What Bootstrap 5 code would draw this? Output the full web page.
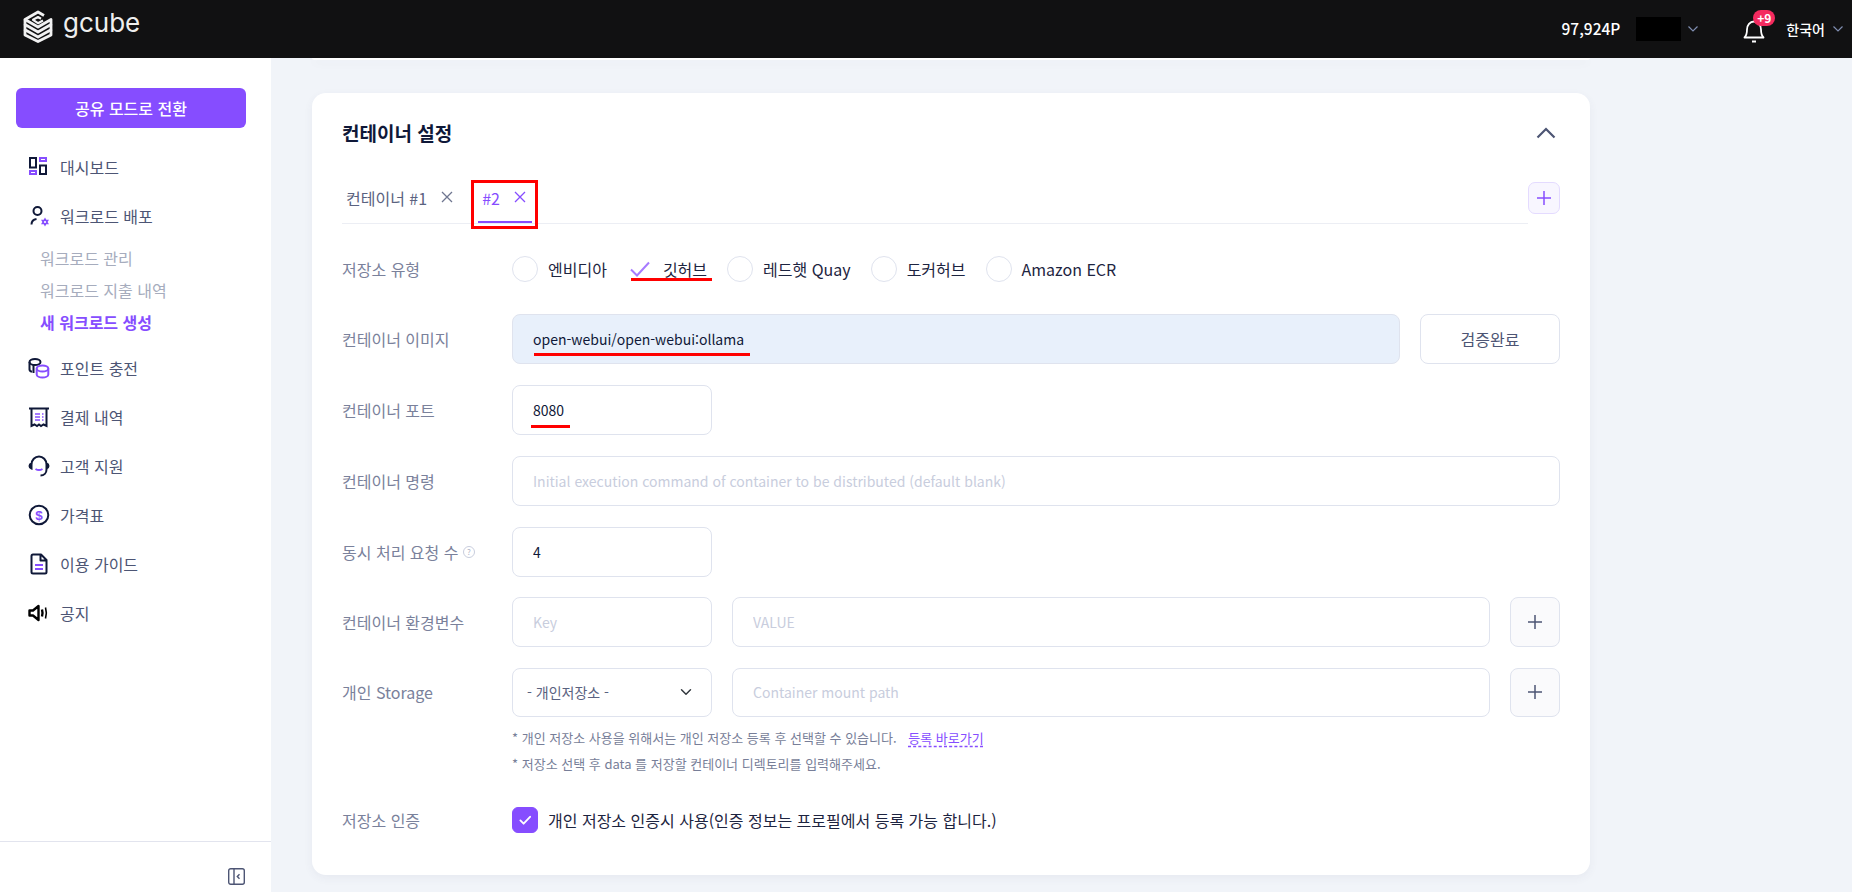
<!DOCTYPE html>
<html lang="ko">
<head>
  <meta charset="utf-8" />
  <title>gcube - 새 워크로드 생성</title>
  <link href="https://cdn.jsdelivr.net/npm/bootstrap@5.3.0/dist/css/bootstrap.min.css" rel="stylesheet" />
  <style>
    html, body { height: 100%; }
    body { font-family: "Noto Sans CJK KR", "Noto Sans", sans-serif; background: #f1f4f9; color: #0f1838; overflow: hidden; }
    .topbar { height: 58px; background: #111112; color: #fff; flex: none; padding: 0 9px 0 23px; }
    .logo-text { font-family: Inter, sans-serif; font-size: 26px; font-weight: 400; line-height: 1; margin-left: 10px; color: #eee; position: relative; top: -6px; }
    .points { font-size: 15.500px; font-weight: 500; }
    .masked { width: 45px; height: 24px; background: #000; margin: 0 7px 0 16px; }
    .bell-wrap { width: 32px; height: 26px; margin: 0 11px 0 45px; }
    .bell-badge { position: absolute; left: 10px; top: -6px; width: 22px; height: 16px; border-radius: 8px; background: #f42a5f; font-size: 12px; font-weight: 700; line-height: 16px; text-align: center; }
    .lang { font-size: 14px; font-weight: 500; margin-right: 8px; }
    .side { width: 271px; background: #fff; flex: none; }
    .mode-btn { width: 230px; height: 40px; margin: 30px 0 14px 16px; background: #864dff; border: 0; border-radius: 6px; color: #fff; font-size: 16px; font-weight: 500; padding: 0; flex: none; }
    .mode-btn:hover { background: #864dff; color: #fff; }
    .side-item { height: 49px; flex: none; padding-left: 28px; color: #4d5574; font-size: 16px; text-decoration: none; }
    .side-item svg { width: 22px; height: 22px; margin-right: 10px; flex: none; }
    .side-sub { padding: 2px 0 5.500px 40px; flex: none; }
    .side-sub a { display: block; height: 32px; line-height: 32px; color: #a6acbd; font-size: 16px; text-decoration: none; }
    .side-sub a.active { color: #864dff; font-weight: 700; }
    .side-foot { height: 51px; border-top: 1px solid #e2e4ee; padding: 26px 26px 0 0; }
    .prev-panel { width: 1278px; height: 2px; margin-left: 41px; background: #fff; border-radius: 0 0 14px 14px; box-shadow: 0 3px 10px rgba(60, 70, 110, .06); }
    .panel { width: 1278px; height: 782px; margin: 33px 0 0 41px; background: #fff; border: 0; border-radius: 14px; box-shadow: 0 3px 10px rgba(60, 70, 110, .06); padding: 26px 30px 0; }
    .panel-title { font-size: 19px; font-weight: 700; height: 28px; line-height: 28px; margin: 0; color: #0f1838; }
    .tab-row { margin-top: 33px; margin-bottom: 32px; }
    .tab-list { height: 44px; border-bottom: 1px solid #eceef4; }
    .tab-item { position: relative; height: 43px; font-size: 16px; color: #5a6280; padding: 0 0 7px 4px; }
    .tab-item .x-mark { margin-left: 13px; width: 14px; height: 14px; position: relative; top: -1px; }
    .tab-item.on { color: #864dff; margin-left: 24px; padding: 0 5px 7px 4px; }
    .tab-item.on::after { content: ""; position: absolute; left: 0; right: 0; bottom: 0; height: 2px; background: #864dff; }
    .red-box { position: absolute; left: -7px; right: -6px; top: 0; bottom: -6px; border: 3px solid #f00; }
    .red-line { position: absolute; height: 3px; background: #f00; }
    .add-tab { width: 32px; height: 32px; margin-top: 2px; background: #f8f6ff; border: 1px solid #e4dbff; border-radius: 7px; padding: 0; }
    .cfg-line { margin-bottom: 21.500px; }
    .cfg-line.tight { margin-bottom: 20.800px; }
    .cfg-label { width: 170px; flex: none; font-size: 16px; color: #7a819b; }
    .help-dot { width: 12px; height: 12px; margin-left: 5px; position: relative; top: -2px; }
    .repo-line { height: 26px; margin-bottom: 32px; font-size: 16px; color: #1d2440; }
    .repo-line .form-check-input { width: 26px; height: 26px; margin: 0 10px 0 0; border: 1px solid #dfe3ee; flex: none; }
    .repo-opt { position: relative; margin-right: 20px; }
    .repo-check { width: 20px; height: 17px; margin: 0 13px 0 3px; }
    .cfg-input { height: 49.500px; border: 1px solid #dfe3ee; border-radius: 8px; font-size: 14px; color: #0f1838; padding: 0 20px; }
    .cfg-input::placeholder { color: #c8cddd; }
    .cfg-input.filled { background: #e8f0fb; }
    .cfg-select { height: 49.500px; border: 1px solid #dfe3ee; border-radius: 8px; font-size: 14px; color: #5a6280; padding: 0 14px; background-position: right 17px center; }
    .w-small { width: 200px; flex: none; }
    .gap-left { margin-left: 20px; }
    .w-verify { width: 140px; height: 49.500px; flex: none; margin-left: 20px; border: 1px solid #dfe3ee; border-radius: 8px; background: #fff; color: #4d5574; font-size: 16px; }
    .w-plus { width: 50px; height: 49.500px; flex: none; margin-left: 20px; border: 1px solid #dfe3ee; border-radius: 8px; background: #fafafc; padding: 0; }
    .note-box { margin: 8px 0 30px 170px; font-size: 13px; line-height: 26px; color: #777e98; }
    .note-box a { color: #864dff; margin-left: 8px; text-decoration: underline dashed; text-underline-offset: 3px; }
    .form-check-input.auth-box { width: 26px; height: 26px; margin: 0 10px 0 0; border-radius: 6px; flex: none; }
    .form-check-input.auth-box:checked { background-color: #864dff; border-color: #864dff; background-size: 100% 100%; background-image: url("data:image/svg+xml,%3csvg xmlns='http://www.w3.org/2000/svg' viewBox='0 0 26 26'%3e%3cpath fill='none' stroke='%23fff' stroke-width='2' stroke-linecap='round' stroke-linejoin='round' d='M8 13.500l3.500 3.500L18.500 9.500'/%3e%3c/svg%3e"); }
    .auth-text { font-size: 16px; color: #1d2440; }
  </style>
</head>
<body class="d-flex flex-column">
  <header class="topbar d-flex align-items-center justify-content-between">
    <div class="d-flex align-items-center">
      <svg width="30" height="33" viewBox="0 0 30 33" fill="none" stroke="#f2f2f2" stroke-width="2.800" stroke-linejoin="round" style="margin-top:-6px">
        <path d="M21 5.500 15 2 2 9.500 15 17 28 9.500V12" />
        <path d="M20 10.500 15 13.200 10 9.800 15 7l3 1.700" stroke-width="2.200" />
        <path d="M2 9.500v5L15 22l13-7.500V12" />
        <path d="M2 14.500v5.200L15 27l13-7.300v-5.200" />
        <path d="M2 19.700V25l13 6.500L28 25v-5.300" />
      </svg>
      <span class="logo-text">gcube</span>
    </div>
    <div class="d-flex align-items-center">
      <span class="points">97,924P</span>
      <span class="masked"></span>
      <svg width="10" height="6" viewBox="0 0 10 6" fill="none" stroke="#7f8db0" stroke-width="1.200"><path d="M.5.500 5 5 9.500.500" /></svg>
      <div class="bell-wrap position-relative">
        <svg width="22" height="26" viewBox="0 0 22 26" fill="none" stroke="#fff" stroke-width="1.800" stroke-linejoin="round"><path d="M1.500 19.500c2-2 2.500-3.500 2.500-8 0-4.500 3-8 7-8s7 3.500 7 8c0 4.500.5 6 2.500 8zM9 23.500h4" /></svg>
        <span class="bell-badge">+9</span>
      </div>
      <span class="lang">한국어</span>
      <svg width="10" height="6" viewBox="0 0 10 6" fill="none" stroke="#7f8db0" stroke-width="1.200"><path d="M.5.500 5 5 9.500.500" /></svg>
    </div>
  </header>

  <div class="d-flex flex-grow-1" style="min-height:0">
    <aside class="side d-flex flex-column">
      <button class="btn mode-btn">공유 모드로 전환</button>
      <a href="#" class="side-item d-flex align-items-center">
        <svg viewBox="0 0 22 22" fill="none" stroke-width="2"><path stroke="#0f1838" d="M2 2h6v9.500H2zM12 9.500h6V18h-6z" /><path stroke="#864dff" d="M2 15h6v3H2zM12 2h6v3h-6z" /></svg>
        대시보드
      </a>
      <a href="#" class="side-item d-flex align-items-center">
        <svg viewBox="0 0 22 22" fill="none"><circle cx="9.500" cy="6" r="4" stroke="#0f1838" stroke-width="2" /><path d="M3.500 19.500c0-3 2-5 5-5.500" stroke="#0f1838" stroke-width="2" /><path d="M17 12.500l1.300 2.300h2.700L19.600 17 21 19.200h-2.700L17 21.500l-1.300-2.300H13L14.400 17 13 14.800h2.700z" fill="#864dff" /><circle cx="17" cy="17" r="1.100" fill="#fff" /></svg>
        워크로드 배포
      </a>
      <div class="side-sub">
        <a href="#">워크로드 관리</a>
        <a href="#">워크로드 지출 내역</a>
        <a href="#" class="active">새 워크로드 생성</a>
      </div>
      <a href="#" class="side-item d-flex align-items-center">
        <svg viewBox="0 0 22 22" fill="none" stroke-width="2"><ellipse cx="7" cy="5" rx="5.500" ry="3" stroke="#0f1838" /><path stroke="#0f1838" d="M1.500 5v7.500c0 1 .8 1.800 2.500 2.300M5.500 8v8" /><ellipse cx="14.500" cy="11.500" rx="5.800" ry="3" stroke="#864dff" /><path stroke="#864dff" d="M8.700 11.500v6c0 1.800 2.800 3 5.800 3s5.800-1.200 5.800-3v-6" /></svg>
        포인트 충전
      </a>
      <a href="#" class="side-item d-flex align-items-center">
        <svg viewBox="0 0 22 22" fill="none" stroke-width="2"><path stroke="#0f1838" d="M1 2.500h20M3.500 2.500v17.500l3-1.500 2.500 1.500 2-1.500 2 1.500 2.500-1.500 3 1.500V2.500" /><path stroke="#864dff" stroke-width="1.500" d="M7 8h5M7 11h5M7 14h5M14 8h1.500M14 11h1.500M14 14h1.500" /></svg>
        결제 내역
      </a>
      <a href="#" class="side-item d-flex align-items-center">
        <svg viewBox="0 0 22 22" fill="none" stroke-width="2"><path stroke="#0f1838" d="M3.500 9.500C3.500 5 7 1.500 11 1.500s7.500 3.500 7.500 8v5c0 3.500-2.500 6-6 6M3.500 8.500C2 9 1.500 10 1.500 11s.5 2 2 2.500zM18.500 8.500c1.500.5 2 1.500 2 2.500s-.5 2-2 2.500z" /><path stroke="#864dff" d="M7.500 14c2 1.200 5 1.200 7 0" /></svg>
        고객 지원
      </a>
      <a href="#" class="side-item d-flex align-items-center">
        <svg viewBox="0 0 22 22" fill="none"><circle cx="11" cy="11" r="9.300" stroke="#0f1838" stroke-width="2" /><text x="11" y="15.700" text-anchor="middle" font-size="13.500" font-weight="700" fill="#864dff" font-family="Liberation Sans, sans-serif">$</text></svg>
        가격표
      </a>
      <a href="#" class="side-item d-flex align-items-center">
        <svg viewBox="0 0 22 22" fill="none" stroke-width="2"><path stroke="#0f1838" stroke-linejoin="round" d="M3.500 3c0-1 .5-1.500 1.500-1.500h8l5.500 5.500v12c0 1-.5 1.500-1.500 1.500H5c-1 0-1.500-.5-1.500-1.500zM12.500 1.500V7.500h6" /><path stroke="#864dff" d="M7 12h8M7 16h8" /></svg>
        이용 가이드
      </a>
      <a href="#" class="side-item d-flex align-items-center">
        <svg viewBox="0 0 22 22" fill="none"><path d="M1.500 8.500H5L10.500 4v14L5 13.500H1.500z" stroke="#000" stroke-width="2.400" stroke-linejoin="round" /><path d="M14 7.500c.7 2.300.7 4.700 0 7" stroke="#000" stroke-width="2.400" /><path d="M17.500 5.500c1.100 3.500 1.100 7.500 0 11" stroke="#000" stroke-width="1.600" /></svg>
        공지
      </a>
      <div class="side-foot mt-auto d-flex justify-content-end">
        <svg width="17" height="17" viewBox="0 0 17 17" fill="none" stroke="#4d5574" stroke-width="1.400"><rect x=".7" y=".7" width="15.600" height="15.600" rx="2" /><path d="M6 .7v15.600M11.500 6.200 9.300 8.500l2.200 2.300" /></svg>
      </div>
    </aside>

    <main class="flex-grow-1">
      <div class="prev-panel"></div>
      <section class="card panel">
        <div class="d-flex align-items-center justify-content-between">
          <h2 class="panel-title">컨테이너 설정</h2>
          <svg class="me-1" width="20" height="12" viewBox="0 0 20 12" fill="none" stroke="#4d5574" stroke-width="2.200"><path d="M1.500 10.500 10 2l8.500 8.500" /></svg>
        </div>

        <div class="tab-row d-flex">
          <div class="tab-list d-flex flex-grow-1">
            <div class="tab-item d-flex align-items-center">
              컨테이너 #1
              <svg class="x-mark" viewBox="0 0 14 14" fill="none" stroke="#6f7690" stroke-width="1.300"><path d="M2 2l10 10M12 2 2 12" /></svg>
            </div>
            <div class="tab-item on d-flex align-items-center">
              #2
              <svg class="x-mark" viewBox="0 0 14 14" fill="none" stroke="#864dff" stroke-width="1.300"><path d="M2 2l10 10M12 2 2 12" /></svg>
              <span class="red-box"></span>
            </div>
          </div>
          <button class="add-tab btn" aria-label="추가">
            <svg class="d-block mx-auto" width="16" height="16" viewBox="0 0 16 16" stroke="#864dff" stroke-width="1.500"><path d="M8 1v14M1 8h14" /></svg>
          </button>
        </div>

        <div class="d-flex align-items-center repo-line">
          <div class="cfg-label">저장소 유형</div>
          <label class="repo-opt d-flex align-items-center"><input class="form-check-input" type="radio" name="repo" />엔비디아</label>
          <label class="repo-opt d-flex align-items-center">
            <svg class="repo-check" viewBox="0 0 20 17" fill="none" stroke="#a77bff" stroke-width="2"><path d="M1 8.500l6 6L19 1.500" /></svg>깃허브
            <span class="red-line" style="left:4px;right:-5px;bottom:0"></span>
          </label>
          <label class="repo-opt d-flex align-items-center"><input class="form-check-input" type="radio" name="repo" />레드햇 Quay</label>
          <label class="repo-opt d-flex align-items-center"><input class="form-check-input" type="radio" name="repo" />도커허브</label>
          <label class="repo-opt d-flex align-items-center"><input class="form-check-input" type="radio" name="repo" />Amazon ECR</label>
        </div>

        <div class="cfg-line d-flex align-items-center">
          <div class="cfg-label">컨테이너 이미지</div>
          <div class="position-relative flex-grow-1">
            <input class="form-control cfg-input filled" value="open-webui/open-webui:ollama" />
            <span class="red-line" style="left:22px;width:216px;top:39px"></span>
          </div>
          <button class="btn w-verify">검증완료</button>
        </div>

        <div class="cfg-line d-flex align-items-center">
          <div class="cfg-label">컨테이너 포트</div>
          <div class="position-relative w-small">
            <input class="form-control cfg-input" value="8080" />
            <span class="red-line" style="left:19px;width:39px;top:40px"></span>
          </div>
        </div>

        <div class="cfg-line d-flex align-items-center">
          <div class="cfg-label">컨테이너 명령</div>
          <input class="form-control cfg-input flex-grow-1 w-auto" placeholder="Initial execution command of container to be distributed (default blank)" />
        </div>

        <div class="cfg-line tight d-flex align-items-center">
          <div class="cfg-label">동시 처리 요청 수<svg class="help-dot" viewBox="0 0 12 12" fill="none" stroke="#c8cddd"><circle cx="6" cy="6" r="5.500" /><text x="6" y="9" text-anchor="middle" font-size="8" fill="#b0b6c8" stroke="none">?</text></svg></div>
          <input class="form-control cfg-input w-small" value="4" />
        </div>

        <div class="cfg-line tight d-flex align-items-center">
          <div class="cfg-label">컨테이너 환경변수</div>
          <input class="form-control cfg-input w-small" placeholder="Key" />
          <input class="form-control cfg-input flex-grow-1 w-auto gap-left" placeholder="VALUE" />
          <button class="btn w-plus" aria-label="추가">
            <svg class="d-block mx-auto" width="16" height="16" viewBox="0 0 16 16" stroke="#4d5574" stroke-width="1.500"><path d="M8 1v14M1 8h14" /></svg>
          </button>
        </div>

        <div class="d-flex align-items-center">
          <div class="cfg-label">개인 Storage</div>
          <select class="form-select cfg-select w-small"><option>- 개인저장소 -</option></select>
          <input class="form-control cfg-input flex-grow-1 w-auto gap-left" placeholder="Container mount path" />
          <button class="btn w-plus" aria-label="추가">
            <svg class="d-block mx-auto" width="16" height="16" viewBox="0 0 16 16" stroke="#4d5574" stroke-width="1.500"><path d="M8 1v14M1 8h14" /></svg>
          </button>
        </div>
        <div class="note-box">
          <div>* 개인 저장소 사용을 위해서는 개인 저장소 등록 후 선택할 수 있습니다. <a href="#">등록 바로가기</a></div>
          <div>* 저장소 선택 후 data 를 저장할 컨테이너 디렉토리를 입력해주세요.</div>
        </div>

        <div class="d-flex align-items-center">
          <div class="cfg-label">저장소 인증</div>
          <input class="form-check-input auth-box" type="checkbox" checked />
          <span class="auth-text">개인 저장소 인증시 사용(인증 정보는 프로필에서 등록 가능 합니다.)</span>
        </div>
      </section>
    </main>
  </div>

  <script src="https://cdn.jsdelivr.net/npm/bootstrap@5.3.0/dist/js/bootstrap.bundle.min.js"></script>
</body>
</html>
